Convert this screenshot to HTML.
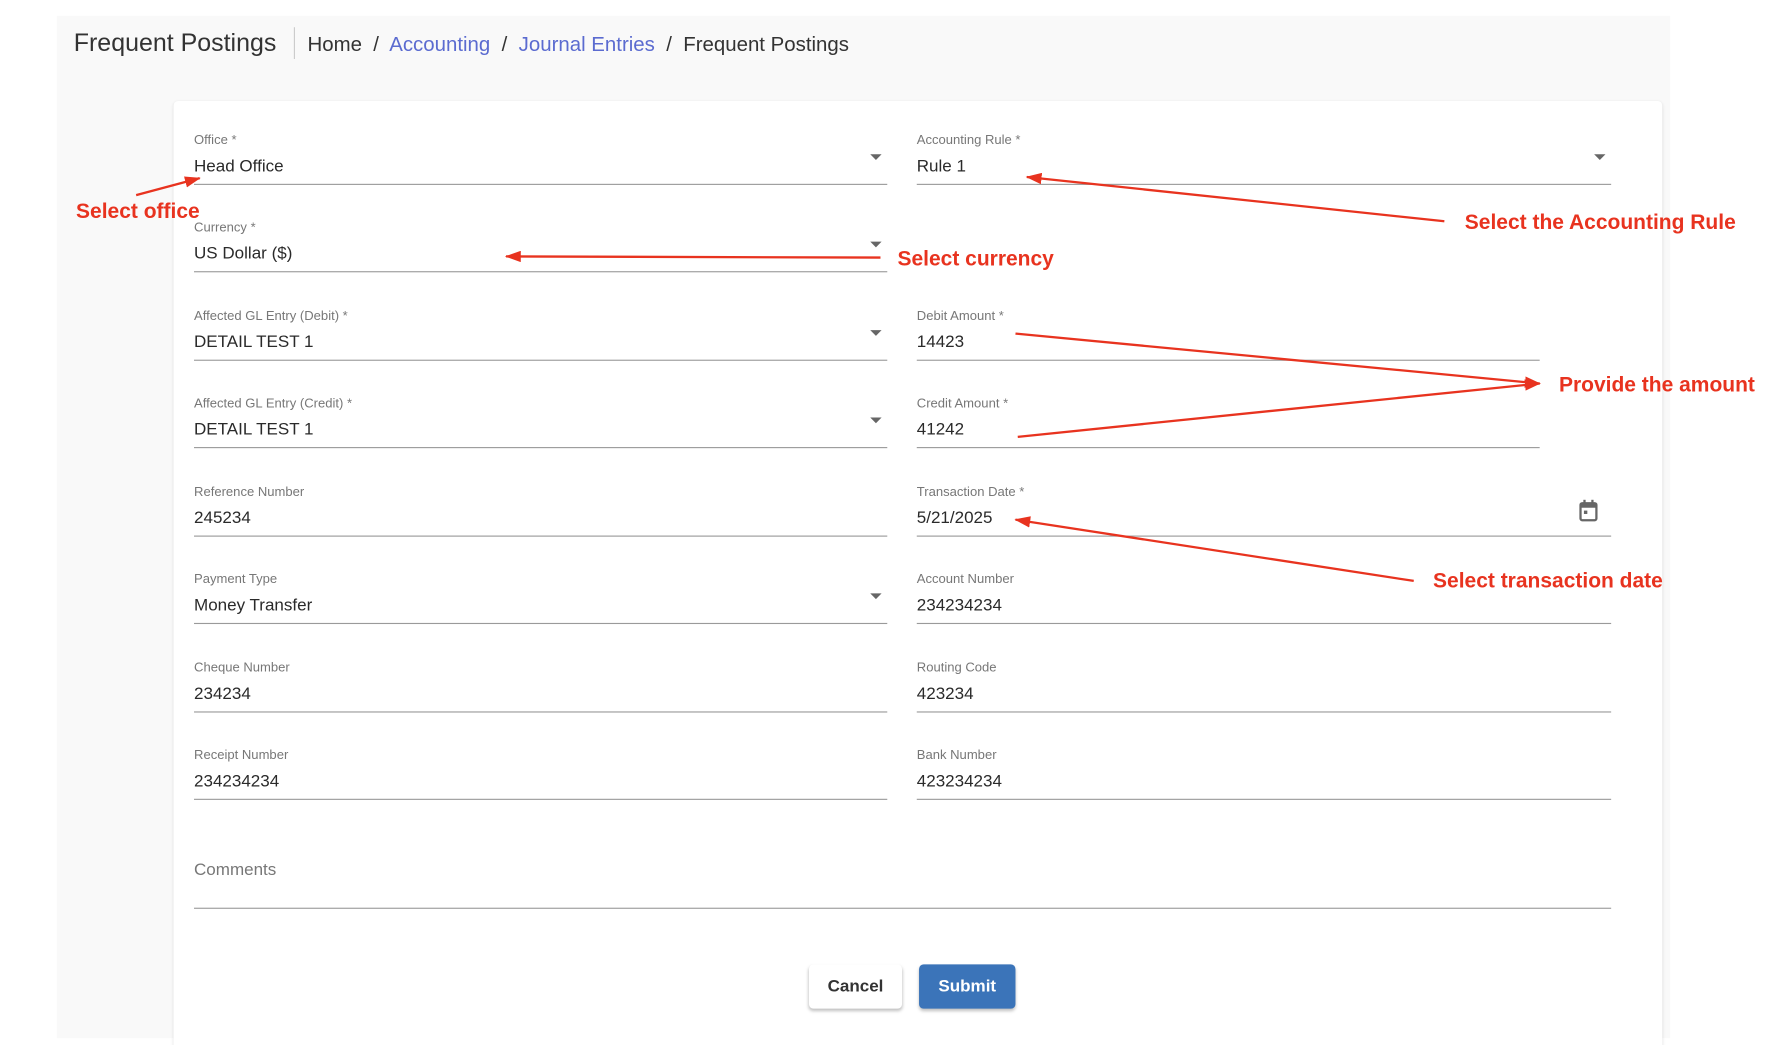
<!DOCTYPE html>
<html><head><meta charset="utf-8"><style>
html,body{margin:0;padding:0;background:#fff;overflow:hidden}
body{width:1770px;height:1045px;position:relative;font-family:"Liberation Sans",Arial,sans-serif}
#w{position:absolute;left:0;top:0;width:1560px;height:921px;transform:scale(1.134615);transform-origin:0 0}
.bg{position:absolute;left:50px;top:14px;width:1422px;height:901px;background:#f9f9f9}
.title{position:absolute;left:65px;top:25px;font-size:22px;color:#333}
.div{position:absolute;left:259px;top:24px;width:1px;height:28px;background:#ccc}
.bc{position:absolute;left:271px;top:29px;font-size:18px;color:#333;white-space:pre}
.bc a{color:#5b6bd0;text-decoration:none}
.card{position:absolute;left:153px;top:89px;width:1312px;height:840px;background:#fff;border-radius:4px;box-shadow:0 1px 3px rgba(0,0,0,.12)}
.f{position:absolute;height:40px;border-bottom:1.5px solid #9a9a9a}
.f .l{position:absolute;left:0;top:-4px;font-size:11.5px;color:#777}
.f .v{position:absolute;left:0;top:16px;font-size:15px;color:#2a2a2a}
.f .dd{position:absolute;right:5px;top:14px;width:0;height:0;border-left:5px solid transparent;border-right:5px solid transparent;border-top:5px solid #666}
.ann{position:absolute;font-size:18.5px;font-weight:bold;color:#e8331f;white-space:nowrap}
.btn{position:absolute;top:850px;height:39px;border-radius:4px;font-size:15px;font-weight:bold;text-align:center;line-height:39px;box-shadow:0 2px 3px rgba(0,0,0,.25)}
</style></head><body><div id="w">
<div class="bg"></div>
<div class="title">Frequent Postings</div>
<div class="div"></div>
<div class="bc">Home  /  <a>Accounting</a>  /  <a>Journal Entries</a>  /  Frequent Postings</div>
<div class="card"></div>

<div class="f" style="left:171px;top:122px;width:611px"><span class="l">Office *</span><span class="v">Head Office</span><i class="dd"></i></div>
<div class="f" style="left:808px;top:122px;width:612px"><span class="l">Accounting Rule *</span><span class="v">Rule 1</span><i class="dd"></i></div>
<div class="f" style="left:171px;top:199px;width:611px"><span class="l">Currency *</span><span class="v">US Dollar ($)</span><i class="dd"></i></div>
<div class="f" style="left:171px;top:277px;width:611px"><span class="l">Affected GL Entry (Debit) *</span><span class="v">DETAIL TEST 1</span><i class="dd"></i></div>
<div class="f" style="left:808px;top:277px;width:549px"><span class="l">Debit Amount *</span><span class="v">14423</span></div>
<div class="f" style="left:171px;top:354px;width:611px"><span class="l">Affected GL Entry (Credit) *</span><span class="v">DETAIL TEST 1</span><i class="dd"></i></div>
<div class="f" style="left:808px;top:354px;width:549px"><span class="l">Credit Amount *</span><span class="v">41242</span></div>
<div class="f" style="left:171px;top:432px;width:611px"><span class="l">Reference Number</span><span class="v">245234</span></div>
<div class="f" style="left:808px;top:432px;width:612px"><span class="l">Transaction Date *</span><span class="v">5/21/2025</span>
<svg style="position:absolute;right:11px;top:8px" width="18" height="20" viewBox="0 0 18 20"><rect x="2" y="3.5" width="14" height="15" rx="1.5" fill="none" stroke="#666" stroke-width="2"/><rect x="2" y="3.5" width="14" height="4" fill="#666"/><rect x="4.5" y="0.5" width="2" height="4" fill="#666"/><rect x="11.5" y="0.5" width="2" height="4" fill="#666"/><rect x="5" y="10" width="3" height="3" fill="#666"/></svg></div>
<div class="f" style="left:171px;top:509px;width:611px"><span class="l">Payment Type</span><span class="v">Money Transfer</span><i class="dd"></i></div>
<div class="f" style="left:808px;top:509px;width:612px"><span class="l">Account Number</span><span class="v">234234234</span></div>
<div class="f" style="left:171px;top:587px;width:611px"><span class="l">Cheque Number</span><span class="v">234234</span></div>
<div class="f" style="left:808px;top:587px;width:612px"><span class="l">Routing Code</span><span class="v">423234</span></div>
<div class="f" style="left:171px;top:664px;width:611px"><span class="l">Receipt Number</span><span class="v">234234234</span></div>
<div class="f" style="left:808px;top:664px;width:612px"><span class="l">Bank Number</span><span class="v">423234234</span></div>
<div class="f" style="left:171px;top:760px;width:1249px"><span class="l" style="font-size:15px;top:-2px">Comments</span></div>

<div class="btn" style="left:713px;width:82px;background:#fff;color:#333">Cancel</div>
<div class="btn" style="left:810px;width:85px;background:#3b74b9;color:#fff">Submit</div>

<div class="ann" style="left:67px;top:175px">Select office</div>
<div class="ann" style="left:791px;top:217px">Select currency</div>
<div class="ann" style="left:1291px;top:185px">Select the Accounting Rule</div>
<div class="ann" style="left:1374px;top:328px">Provide the amount</div>
<div class="ann" style="left:1263px;top:501px">Select transaction date</div>

<svg style="position:absolute;left:0;top:0" width="1560" height="921">
<defs><marker id="a" markerWidth="14" markerHeight="10" refX="13" refY="5" orient="auto" markerUnits="userSpaceOnUse"><path d="M0,0 L14,5 L0,10 Z" fill="#e8331f"/></marker></defs>
<g stroke="#e8331f" stroke-width="2" fill="none">
<line x1="120" y1="172" x2="176" y2="157" marker-end="url(#a)"/>
<line x1="776" y1="227" x2="446" y2="226" marker-end="url(#a)"/>
<line x1="1273" y1="195" x2="905" y2="156" marker-end="url(#a)"/>
<line x1="895" y1="294" x2="1357" y2="338" marker-end="url(#a)"/>
<line x1="897" y1="385" x2="1357" y2="338" marker-end="url(#a)"/>
<line x1="1246" y1="512" x2="895" y2="458" marker-end="url(#a)"/>
</g></svg>
</div></body></html>
